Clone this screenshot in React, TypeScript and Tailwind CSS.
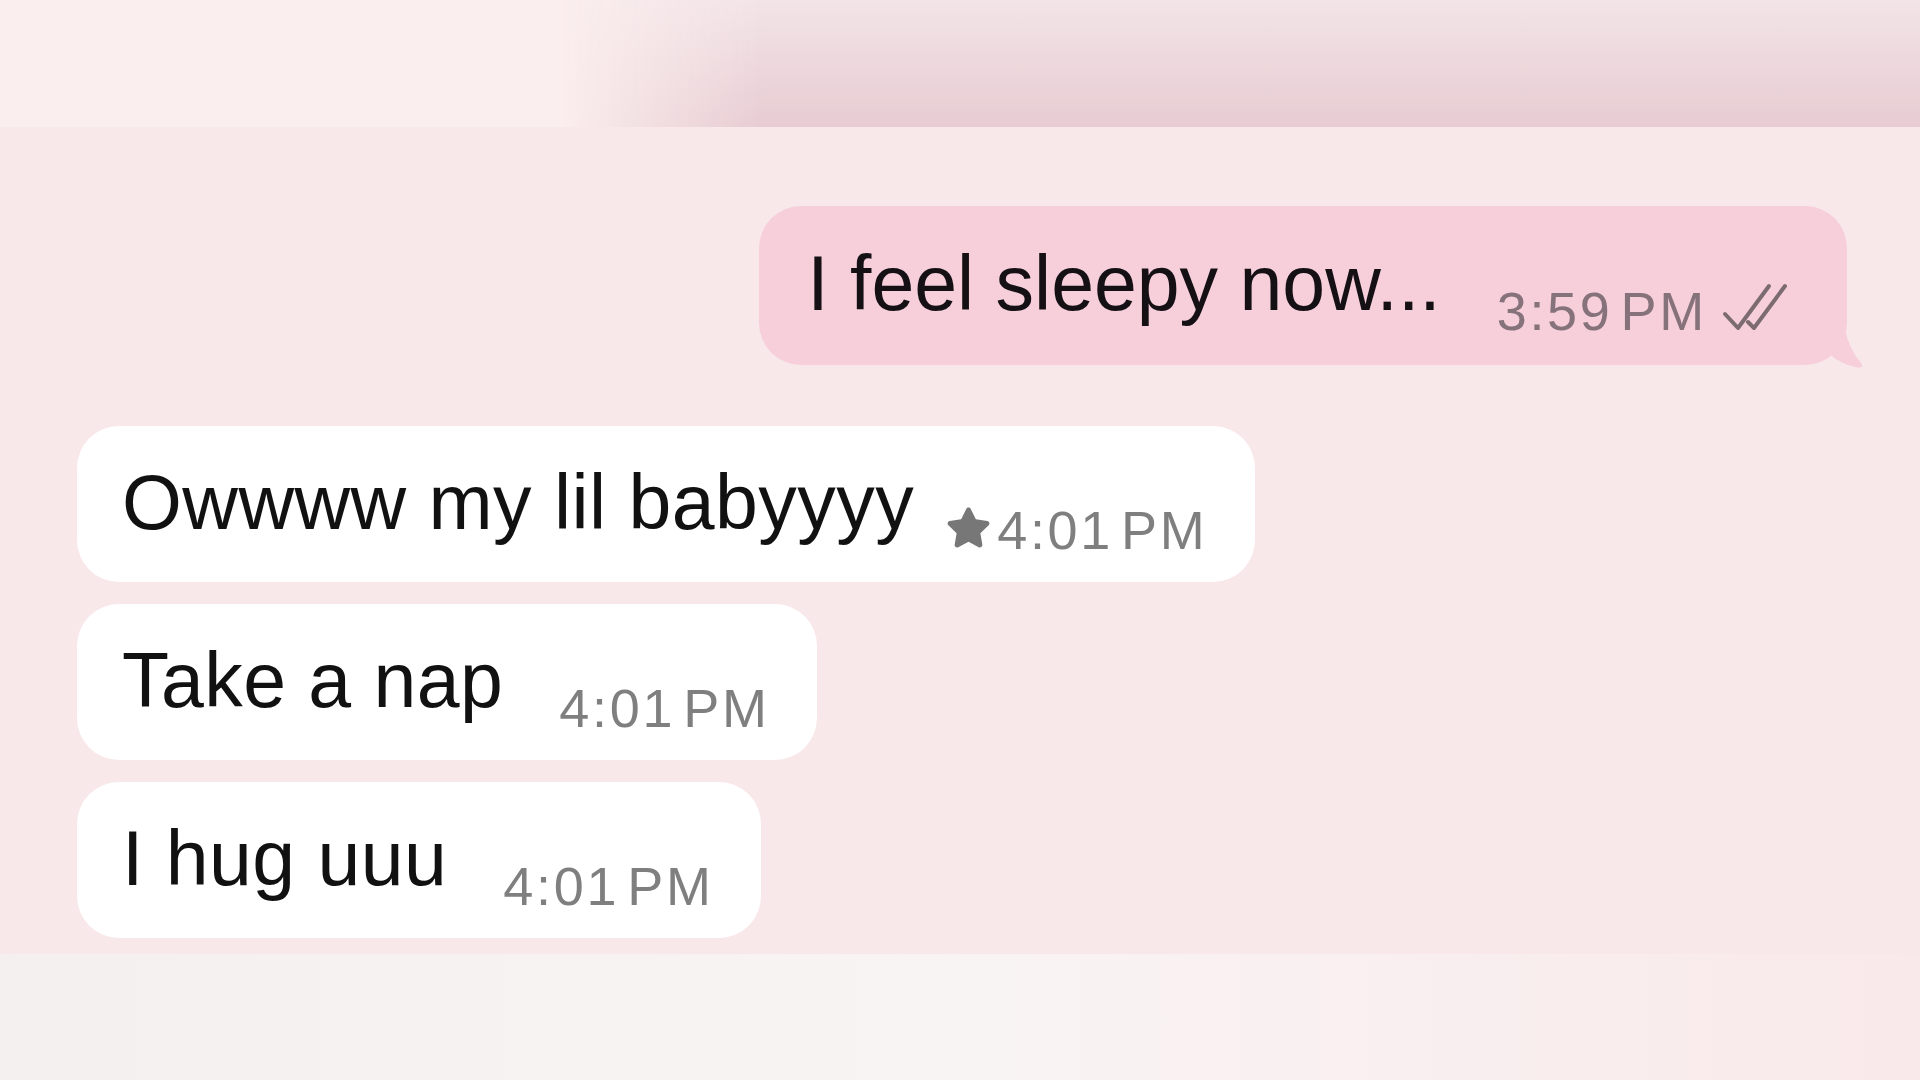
import { FaStar } from "react-icons/fa";

const incoming = [
  { text: "Owwww my lil babyyyy", time: "4:01", starred: true },
  { text: "Take a nap", time: "4:01", starred: false },
  { text: "I hug uuu", time: "4:01", starred: false },
];

const DoubleCheck = () => (
  <svg width="80" height="52" viewBox="0 0 80 52" fill="none" className="ml-[14px] mb-[4px]">
    <path d="M4 32 L17 46 L48 4" stroke="#7d6b72" strokeWidth="4" strokeLinecap="round" strokeLinejoin="round" />
    <path d="M27 40 L33 46 L64 4" stroke="#7d6b72" strokeWidth="4" strokeLinecap="round" strokeLinejoin="round" />
  </svg>
);

const Time = ({ t, color }: { t: string; color: string }) => (
  <span className={`text-[54px] leading-none tracking-[0.05em] ${color}`}>
    {t}
    <span className="ml-[8px]">PM</span>
  </span>
);

const App = () => {
  return (
    <div
      className="w-[1920px] h-[1080px] overflow-hidden bg-[#f9e8ea] flex flex-col"
      style={{ fontFamily: '"Liberation Sans", Arial, sans-serif' }}
    >
      {/* blurred top bar */}
      <div className="h-[127px] shrink-0 flex bg-[#fbeeee]">
        <div className="w-[560px] shrink-0"></div>
        <div className="flex-1 bg-gradient-to-b from-[#f2e4e7] via-[#edd8dc] to-[#e7ccd2] [mask-image:linear-gradient(to_right,transparent,black_200px)]"></div>
      </div>

      <div className="flex flex-col pt-[79px] shrink-0">
        {/* outgoing */}
        <div className="flex justify-end pr-[73px]">
          <div className="relative">
            <div className="flex items-end bg-[#f6cfdb] rounded-[42px] pl-[48px] pr-[46px] pt-[39px] pb-[27px]">
              <span className="text-[77px] leading-none text-[#141014] mb-[16px]">I feel sleepy now...</span>
              <span className="ml-[56px]"></span>
              <Time t="3:59" color="text-[#86727a]" />
              <DoubleCheck />
            </div>
            <svg width="40" height="40" viewBox="0 0 40 40" className="absolute right-[-24px] bottom-[-4px]">
              <path d="M0 0 L14 0 Q18 20 30 34 Q34 40 24 38 Q8 34 0 26 Z" fill="#f6cfdb" />
            </svg>
          </div>
        </div>

        {/* incoming */}
        <div className="flex flex-col items-start gap-[22px] pl-[77px] mt-[61px]">
          {incoming.map((m) => (
            <div key={m.text} className="flex items-end bg-white rounded-[42px] pl-[45px] pr-[47px] pt-[38px] pb-[25px]">
              <span className="text-[77px] leading-none tracking-[0.006em] text-[#111] mb-[16px]">{m.text}</span>
              {m.starred ? (
                <FaStar className="ml-[32px] mr-[6px] mb-[7px] text-[#777] w-[45px] h-[45px]" />
              ) : (
                <span className="ml-[56px]"></span>
              )}
              <Time t={m.time} color="text-[#7f7f7f]" />
            </div>
          ))}
        </div>
      </div>

      <div className="mt-[16px] flex-1 bg-gradient-to-r from-[#f4f0f0] via-[#f9f4f4] to-[#f9e9ea]"></div>
    </div>
  );
};

export default App;
